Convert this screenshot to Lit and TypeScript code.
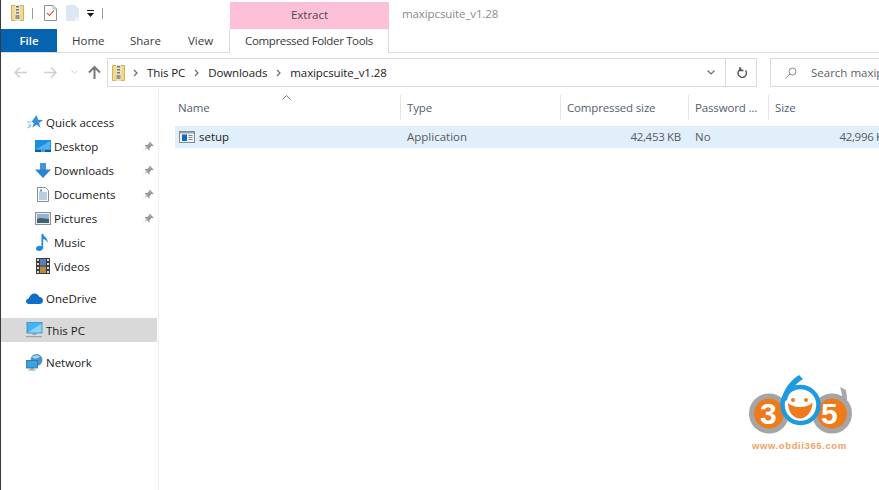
import { LitElement, html, css, svg } from "lit";
import { customElement } from "lit/decorators.js";

const zipIcon = () => html`<svg width="13" height="16" viewBox="0 0 13 16">
  <path d="M0.500 0.500h12v15h-12z" fill="#f3da86" stroke="#cdb061"/>
  <rect x="4" y="0" width="5" height="16" fill="#e8e4d4"/>
  <path d="M5 1h3v1.500H5zM5 4h3v1.500H5zM5 7h3v1.500H5z" fill="#7a7668"/>
  <rect x="4.500" y="10" width="4" height="4" fill="#9a9686"/>
</svg>`;

const pin = html`<svg class="pin" width="11" height="11" viewBox="0 0 11 11">
  <path d="M6.500 0.500l4 4-1 .8-1-.3-2 2 .2 1.800-.8.800L3.500 6.200.7 10.300.3 10 4.300 7 1.800 4.500l.8-.8 1.800.2 2-2-.3-1z" fill="#9a9a9a"/>
</svg>`;

const chev = html`<svg class="chev" width="5" height="8" viewBox="0 0 5 8"><path d="M1 1l3 3-3 3" fill="none" stroke="#6a6a6a" stroke-width="1.200"/></svg>`;

const icons: Record<string, unknown> = {
  star: html`<svg width="16" height="15" viewBox="0 0 16 15"><path d="M9.500 0l1.600 4.800 4.900.1-4 3 1.500 4.900-4-3-4.200 3 1.500-4.900-2-1.500z" fill="#2f8fdc"/><path d="M0 7h4.500M1 10h3.500M0.500 13L4 11" stroke="#7cc0ee" stroke-width="1.200"/></svg>`,
  desktop: html`<svg width="16" height="12" viewBox="0 0 16 12"><rect width="16" height="11" fill="#1e8fe0"/><path d="M1 9.500L15 1v8.500z" fill="#4fb3f0"/><rect y="10" width="16" height="2" fill="#0b5f9e"/><rect x="6" y="10.500" width="4" height="1" fill="#9fd3f5"/></svg>`,
  downloads: html`<svg width="16" height="15" viewBox="0 0 16 15"><rect x="5" y="0" width="6" height="7" fill="#3f94dc"/><path d="M0 6.500h16l-8 8.500z" fill="#2b83d2"/></svg>`,
  documents: html`<svg width="12" height="15" viewBox="0 0 12 15"><path d="M.5.500h8l3 3v11h-11z" fill="#fff" stroke="#8d8d8d"/><path d="M2 6h8M2 8h8M2 10h8M2 12h8" stroke="#6f9fc8"/><path d="M4 1.500l1.500 3h-3z" fill="#3f8fcf"/></svg>`,
  pictures: html`<svg width="16" height="13" viewBox="0 0 16 13"><rect x=".5" y=".5" width="15" height="12" fill="#e8eef3" stroke="#8a8f94"/><rect x="2" y="2" width="12" height="5" fill="#8fb6d4"/><path d="M2 7c4-2 8 0 12 0v4H2z" fill="#44606f"/></svg>`,
  music: html`<svg width="13" height="17" viewBox="0 0 13 17"><path d="M5.500 0h1.700c.3 3 5.300 4 4.300 9-.5-2.500-2.500-3.500-4.300-4v8.500c0 2-2 3.500-4 3.500S0 15.800 0 14.500s1.700-2.700 3.500-2.700c.8 0 1.500.2 2 .5z" fill="#2187dc"/></svg>`,
  videos: html`<svg width="14" height="16" viewBox="0 0 14 16"><rect width="14" height="16" fill="#3c3c3c"/><path d="M1 1h2v2H1zM1 5h2v2H1zM1 9h2v2H1zM1 13h2v2H1zM11 1h2v2h-2zM11 5h2v2h-2zM11 9h2v2h-2zM11 13h2v2h-2z" fill="#d8d8d8"/><rect x="4" y="1" width="6" height="6.500" fill="#5a7fc0"/><rect x="4" y="8.500" width="6" height="6.500" fill="#b88a3c"/></svg>`,
  onedrive: html`<svg width="17" height="11" viewBox="0 0 17 11"><path d="M3 11C1 11 0 9.700 0 8.300 0 6.800 1.200 5.700 2.800 5.600 3.500 2.500 5.800 0.500 8.500 0.500c2.200 0 4 1.300 4.800 3.300 2 .2 3.700 1.800 3.700 3.700 0 2-1.500 3.500-3.500 3.500z" fill="#0f6fc6"/></svg>`,
  pc: html`<svg width="17" height="16" viewBox="0 0 17 16"><rect x="1" y="0" width="15" height="11" fill="#45b4f2" stroke="#3a7fb0" stroke-width=".8"/><path d="M1.500 10.500L15.500 2v8.500z" fill="#8bd3f8"/><rect x="6.500" y="11" width="4" height="2" fill="#8da5b5"/><rect x="0" y="14" width="16" height="1.200" fill="#9aa4ab"/></svg>`,
  network: html`<svg width="17" height="17" viewBox="0 0 17 17"><circle cx="10.500" cy="6" r="6" fill="#4d93c9"/><path d="M6 3c2-2 6-2 8-.5-2 2-5 3-8 .5z" fill="#a9d3ee"/><rect x="0.500" y="6.500" width="11" height="7.500" fill="#36a3e6" stroke="#2f6f9c" stroke-width=".8"/><rect x="4.500" y="14" width="3" height="1.500" fill="#7f97a8"/><rect x="2.500" y="15.500" width="7" height="1" fill="#7f97a8"/></svg>`,
};

const quick = [
  ["Desktop", "desktop"],
  ["Downloads", "downloads"],
  ["Documents", "documents"],
  ["Pictures", "pictures"],
];

const columns: [string, number][] = [
  ["Name", 231],
  ["Type", 160],
  ["Compressed size", 128],
  ["Password ...", 80],
  ["Size", 111],
];

@customElement("app-root")
export class AppRoot extends LitElement {
  static styles = css`
    :host {
      display: block;
      position: relative;
      width: 879px;
      height: 490px;
      overflow: hidden;
      background: #fff;
      box-sizing: border-box;
      border-left: 1px solid #3a3a3a;
      font-family: "Open Sans", "Noto Sans", sans-serif;
      font-size: 11.5px;
      color: #1a1a1a;
    }
    .title-row { display: flex; height: 29px; align-items: flex-end; }
    .qat {
      display: flex;
      align-items: center;
      width: 229px;
      height: 29px;
      padding: 0 0 3px 10px;
      box-sizing: border-box;
    }
    .sep { width: 1px; height: 11px; background: #9a9a9a; }
    .sep.a { margin: 0 11px 0 8px; }
    .sep.b { margin-left: 8px; }
    .caret { margin-left: 8px; }
    .q2 { margin-right: 9px; }
    .extract {
      width: 159px;
      height: 27px;
      background: #fdc0d8;
      text-align: center;
      line-height: 26px;
      color: #4a4a4a;
    }
    .win-title {
      margin-left: 13px;
      align-self: flex-start;
      line-height: 28px;
      color: #8a8a8a;
      letter-spacing: -0.1px;
    }
    .tabs {
      display: flex;
      height: 24px;
      border-bottom: 1px solid #dadbdc;
      box-sizing: border-box;
    }
    .tab { line-height: 23px; color: #3a3a3a; }
    .tab.file {
      width: 56px;
      height: 23px;
      text-align: center;
      background: #0563b0;
      color: #fff;
      font-weight: 600;
    }
    .tab.home { margin-left: 15px; width: 58px; }
    .tab.share { width: 58px; }
    .tab.view { width: 41px; }
    .tab.tools {
      height: 24px;
      width: 160px;
      text-align: center;
      box-sizing: border-box;
      border: solid #dadbdc;
      border-width: 0 1px;
      background: #fff;
      letter-spacing: -0.35px;
      white-space: nowrap;
    }
    .nav {
      display: flex;
      align-items: center;
      height: 36px;
      margin-top: 1px;
      padding-top: 1px;
      box-sizing: border-box;
    }
    .arrows {
      display: flex;
      align-items: center;
      flex: none;
      width: 106px;
      height: 30px;
      padding-left: 13px;
      box-sizing: border-box;
    }
    .fwd { margin-left: 17px; }
    .dn { margin-left: 14px; }
    .up { margin-left: 10px; }
    .addr {
      display: flex;
      align-items: center;
      width: 650px;
      flex: none;
      height: 29px;
      box-sizing: border-box;
      border: 1px solid #d9d9d9;
      padding-left: 4px;
      letter-spacing: -0.1px;
    }
    .chev { margin: 0 9px; display: block; }
    .addr > svg:first-child { margin-right: -1px; }
    .spacer { flex: 1; }
    .down { margin-right: 10px; }
    .refresh {
      display: flex;
      align-items: center;
      justify-content: center;
      width: 30px;
      height: 27px;
      border-left: 1px solid #d9d9d9;
    }
    .search {
      display: flex;
      align-items: center;
      flex: none;
      width: 109px;
      height: 29px;
      margin-left: 13px;
      box-sizing: border-box;
      border: 1px solid #d9d9d9;
      border-right: 0;
      padding-left: 14px;
      gap: 14px;
      color: #5f5f5f;
      white-space: nowrap;
    }
    .search svg { flex: none; }
    .main { display: flex; height: 400px; }
    .side {
      width: 158px;
      flex: none;
      box-sizing: border-box;
      border-right: 1px solid #efefef;
      padding-top: 20px;
    }
    .item { display: flex; align-items: center; height: 24px; width: 156px; color: #1a1a1a; }
    .ico { display: flex; justify-content: center; align-items: center; width: 19px; flex: none; }
    .item.top { padding-left: 24px; box-sizing: border-box; gap: 2px; }
    .item.sub { padding-left: 32px; box-sizing: border-box; gap: 2px; }
    .item.sub .label { flex: 1; }
    .pin { margin-right: 3px; }
    .item.sel { background: #d9d9d9; }
    .gap { height: 8px; }
    .list { flex: 1; min-width: 0; position: relative; }
    .head { display: flex; height: 25px; margin-top: 5px; padding-left: 11px; }
    .col {
      box-sizing: border-box;
      padding-left: 6px;
      line-height: 25px;
      color: #54606c;
      letter-spacing: -0.15px;
      white-space: nowrap;
      border-right: 1px solid #e5e5e5;
      flex: none;
    }
    .col:first-child { padding-left: 8px; }
    .col:last-child { border-right: 0; }
    .sort { position: absolute; left: 123px; top: 5px; display: block; }
    .row {
      display: flex;
      height: 22px;
      margin: 6px 0 0 16px;
      width: 720px;
      background: #e1effa;
      line-height: 22px;
      color: #5a5a5a;
    }
    .cell { box-sizing: border-box; white-space: nowrap; flex: none; }
    .c-name {
      width: 232px;
      padding-left: 4px;
      display: flex;
      align-items: center;
      gap: 4px;
      color: #1a1a1a;
    }
    .c-type { width: 131px; }
    .c-comp { width: 143px; text-align: right; letter-spacing: -0.3px; }
    .c-pass { width: 67px; padding-left: 14px; }
    .c-size { width: 142px; text-align: right; letter-spacing: -0.3px; }
    .logo { position: absolute; left: 746px; top: 374px; width: 106px; height: 84px; }
    .logo svg { display: block; }
    .digit {
      position: absolute;
      font-family: "Liberation Sans", sans-serif;
      font-weight: 700;
      font-size: 30px;
      line-height: 30px;
      color: #fff;
    }
    .d3 { left: 13px; top: 25px; }
    .d5 { left: 74px; top: 25px; }
    .url {
      position: absolute;
      left: 5px;
      top: 66px;
      font-family: "Liberation Sans", sans-serif;
      font-size: 9.500px;
      font-weight: 700;
      letter-spacing: .6px;
      color: #f0a264;
      white-space: nowrap;
      line-height: 12px;
    }
  `;

  render() {
    return html`
      <div class="title-row">
        <div class="qat">
          ${zipIcon()}
          <span class="sep a"></span>
          <svg class="q2" width="13" height="16" viewBox="0 0 13 16"><path d="M.5.500h8.500l3.500 3.500v11.500H.5z" fill="#fff" stroke="#8f8f8f"/><path d="M9 .5v3.500h3.500" fill="none" stroke="#b5b5b5"/><path d="M3 8l2.500 2.500 4.500-5" fill="none" stroke="#d9604a" stroke-width="1.200"/></svg>
          <svg width="13" height="16" viewBox="0 0 13 16"><path d="M0 0h9l4 4v12H0z" fill="#dde6f3"/><path d="M9 12h4v4H9z" fill="#eef3f9"/></svg>
          <svg class="caret" width="7" height="7" viewBox="0 0 7 7"><path d="M0 0h7v1H0zM0 3h7L3.500 7z" fill="#1a1a1a"/></svg>
          <span class="sep b"></span>
        </div>
        <div class="extract">Extract</div>
        <div class="win-title">maxipcsuite_v1.28</div>
      </div>
      <div class="tabs">
        <div class="tab file">File</div>
        <div class="tab home">Home</div>
        <div class="tab share">Share</div>
        <div class="tab view">View</div>
        <div class="tab tools">Compressed Folder Tools</div>
      </div>
      <div class="nav">
        <div class="arrows">
          <svg width="13" height="11" viewBox="0 0 13 11"><path d="M6 .5L1 5.500l5 5M1 5.500h12" fill="none" stroke="#cfcfcf" stroke-width="1.500"/></svg>
          <svg class="fwd" width="13" height="11" viewBox="0 0 13 11"><path d="M7 .5l5 5-5 5M12 5.500H0" fill="none" stroke="#cfcfcf" stroke-width="1.500"/></svg>
          <svg class="dn" width="7" height="5" viewBox="0 0 7 5"><path d="M.5.500l3 3 3-3" fill="none" stroke="#cfcfcf"/></svg>
          <svg class="up" width="13" height="13" viewBox="0 0 13 13"><path d="M1 6.500l5.500-5.500 5.500 5.500M6.500 1.500V13" fill="none" stroke="#777" stroke-width="2"/></svg>
        </div>
        <div class="addr">
          ${zipIcon()}
          ${chev}
          <span>This PC</span>
          ${chev}
          <span>Downloads</span>
          ${chev}
          <span>maxipcsuite_v1.28</span>
          <span class="spacer"></span>
          <svg class="down" width="8" height="5" viewBox="0 0 8 5"><path d="M.5.500L4 4 7.500.5" fill="none" stroke="#6a6a6a" stroke-width="1.200"/></svg>
          <div class="refresh">
            <svg width="11" height="12" viewBox="0 0 11 12"><path d="M8.500 3.500a4.200 4.200 0 1 1-4-1.500M3 0v3.500h3.500" fill="none" stroke="#555" stroke-width="1.400" transform="translate(1 0)"/></svg>
          </div>
        </div>
        <div class="search">
          <svg width="12" height="12" viewBox="0 0 12 12"><circle cx="7.500" cy="4.500" r="3.500" fill="none" stroke="#8a8a8a"/><path d="M5 7L.5 11.500" stroke="#8a8a8a"/></svg>
          <span>Search maxip</span>
        </div>
      </div>
      <div class="main">
        <div class="side">
          <div class="item top"><span class="ico">${icons.star}</span><span>Quick access</span></div>
          ${quick.map(([n, i]) => html`<div class="item sub"><span class="ico">${icons[i]}</span><span class="label">${n}</span>${pin}</div>`)}
          <div class="item sub"><span class="ico">${icons.music}</span><span class="label">Music</span></div>
          <div class="item sub"><span class="ico">${icons.videos}</span><span class="label">Videos</span></div>
          <div class="gap"></div>
          <div class="item top"><span class="ico">${icons.onedrive}</span><span>OneDrive</span></div>
          <div class="gap"></div>
          <div class="item top sel"><span class="ico">${icons.pc}</span><span>This PC</span></div>
          <div class="gap"></div>
          <div class="item top"><span class="ico">${icons.network}</span><span>Network</span></div>
        </div>
        <div class="list">
          <svg class="sort" width="9" height="5" viewBox="0 0 9 5"><path d="M.5 4.500l4-4 4 4" fill="none" stroke="#7a7a7a"/></svg>
          <div class="head">
            ${columns.map(([n, w]) => html`<div class="col" style="width:${w}px">${n}</div>`)}
          </div>
          <div class="row">
            <div class="cell c-name">
              <svg width="16" height="12" viewBox="0 0 16 12"><rect x=".5" y=".5" width="15" height="11" fill="#f4f4f4" stroke="#7f8a94"/><rect x="1" y="1" width="14" height="1.500" fill="#9aa4ad"/><rect x="3" y="3.500" width="5" height="6.500" fill="#0a6cc4"/><path d="M9.500 4.500h4M9.500 6.500h4M9.500 8.500h4" stroke="#7f8a94"/></svg>
              <span>setup</span>
            </div>
            <div class="cell c-type">Application</div>
            <div class="cell c-comp">42,453 KB</div>
            <div class="cell c-pass">No</div>
            <div class="cell c-size">42,996 KB</div>
          </div>
        </div>
      </div>
      <div class="logo">
        <svg width="106" height="66" viewBox="0 0 106 66">
          ${svg`
            <path d="M93 13L99 16C100.500 24 100.500 32 99 40H95C96 30 96 22 93 13z" fill="#a8a8a8"/>
            <circle cx="22" cy="39.500" r="17.500" fill="#ee7a1c" stroke="#a5a5a5" stroke-width="5"/>
            <circle cx="85" cy="39.500" r="17.500" fill="#ee7a1c" stroke="#a5a5a5" stroke-width="5"/>
            <circle cx="53.500" cy="31" r="18" fill="#fff" stroke="#1e9bde" stroke-width="4.500"/>
            <path d="M33.500 30C35 18 42 7 52 1L56 5C48 10 42 18 40 26z" fill="#1e9bde"/>
            <circle cx="46" cy="26" r="2" fill="#ee7a1c"/>
            <circle cx="59" cy="26" r="2" fill="#ee7a1c"/>
            <path d="M41 29c4 3.500 8 4 12.500 4s8.500-1 12-4.500c0 9-6 16-12.500 16S41 38 41 29z" fill="#ee7a1c"/>
          `}
        </svg>
        <span class="digit d3">3</span>
        <span class="digit d5">5</span>
        <span class="url">www.obdii365.com</span>
      </div>
    `;
  }
}
